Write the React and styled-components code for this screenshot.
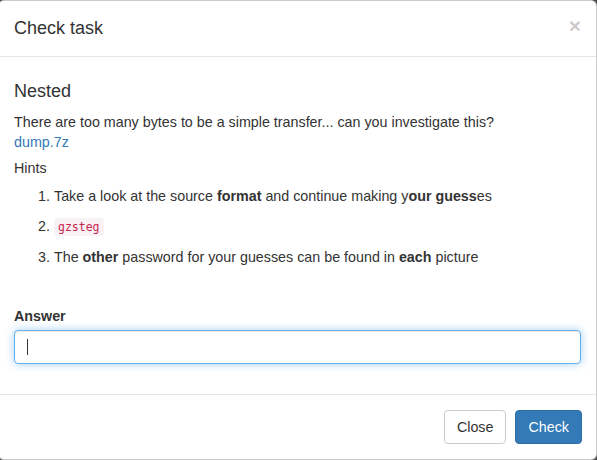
import styled, { createGlobalStyle } from "styled-components";

const Global = createGlobalStyle`
    html, body {
        margin: 0;
        padding: 0;
        background: #4b4b4b;
        overflow: hidden;
    }
    * {
        box-sizing: border-box;
    }
`;

const Modal = styled.div`
    width: 599px;
    margin: 0 0 0 -2px;
    background: #fff;
    border: 1px solid rgba(0, 0, 0, 0.2);
    border-radius: 6px;
    font-family: "Liberation Sans", Arial, sans-serif;
    font-size: 14.3px;
    line-height: 20px;
    color: #333;
`;

const Header = styled.div`
    display: flex;
    align-items: flex-start;
    justify-content: space-between;
    padding: 15px;
    border-bottom: 1px solid #e5e5e5;
`;

const Title = styled.h4`
    margin: 0;
    font-size: 18px;
    font-weight: 500;
    line-height: 25px;
`;

const CloseX = styled.button`
    margin-top: -1px;
    padding: 0;
    border: 0;
    background: none;
    font-family: inherit;
    font-size: 21px;
    font-weight: 700;
    line-height: 1;
    color: #000;
    opacity: 0.2;
    cursor: pointer;
`;

const Body = styled.div`
    padding: 15px;
`;

const TaskName = styled.h4`
    margin: 10px 0;
    font-size: 18px;
    font-weight: 500;
    line-height: 1.1;
`;

const Text = styled.p`
    margin: 0 0 ${(p) => p.$gap ?? 10}px;
`;

const Link = styled.a`
    color: #337ab7;
    text-decoration: none;
`;

const Hints = styled.ol`
    margin: 0 0 39px;
    padding-left: 40px;
`;

const Hint = styled.li`
    margin-bottom: 10px;
`;

const Code = styled.code`
    padding: 2px 4px;
    font-family: "DejaVu Sans Mono", "Liberation Mono", monospace;
    font-size: 11.5px;
    color: #c7254e;
    background: #f9f2f4;
    border-radius: 4px;
`;

const FormGroup = styled.div`
    margin-bottom: 15px;
`;

const Label = styled.label`
    display: inline-block;
    margin-bottom: 4px;
    font-weight: 700;
`;

const Field = styled.div`
    position: relative;
`;

const Input = styled.input`
    display: block;
    width: 100%;
    height: 34px;
    padding: 6px 12px;
    font-family: inherit;
    font-size: 14px;
    color: #555;
    background: #fff;
    border: 1px solid #66afe9;
    border-radius: 4px;
    outline: 0;
    box-shadow: inset 0 1px 1px rgba(0, 0, 0, 0.075), 0 0 8px rgba(102, 175, 233, 0.6);
`;

const Caret = styled.span`
    position: absolute;
    left: 13px;
    top: 9px;
    width: 1px;
    height: 16px;
    background: #333;
`;

const Footer = styled.div`
    display: flex;
    justify-content: flex-end;
    gap: 9px;
    padding: 15px 14px 15px 15px;
    border-top: 1px solid #e5e5e5;
`;

const Button = styled.button`
    height: 34px;
    padding: 6px 12px;
    font-family: inherit;
    font-size: 14.3px;
    line-height: 20px;
    border-radius: 4px;
    cursor: pointer;
    color: ${(p) => (p.$primary ? "#fff" : "#333")};
    background: ${(p) => (p.$primary ? "#337ab7" : "#fff")};
    border: 1px solid ${(p) => (p.$primary ? "#2e6da4" : "#ccc")};
`;

const App = () => (
    <>
        <Global />
        <Modal>
            <Header>
                <Title>Check task</Title>
                <CloseX>×</CloseX>
            </Header>
            <Body>
                <TaskName>Nested</TaskName>
                <Text $gap={6}>
                    There are too many bytes to be a simple transfer... can you investigate this?
                    <br />
                    <Link href="#">dump.7z</Link>
                </Text>
                <Text $gap={8}>Hints</Text>
                <Hints>
                    <Hint>
                        Take a look at the source <b>format</b> and continue making y<b>our guess</b>es
                    </Hint>
                    <Hint>
                        <Code>gzsteg</Code>
                    </Hint>
                    <Hint>
                        The <b>other</b> password for your guesses can be found in <b>each</b> picture
                    </Hint>
                </Hints>
                <FormGroup>
                    <Label>Answer</Label>
                    <Field>
                        <Input type="text" />
                        <Caret />
                    </Field>
                </FormGroup>
            </Body>
            <Footer>
                <Button>Close</Button>
                <Button $primary>Check</Button>
            </Footer>
        </Modal>
    </>
);

export default App;
